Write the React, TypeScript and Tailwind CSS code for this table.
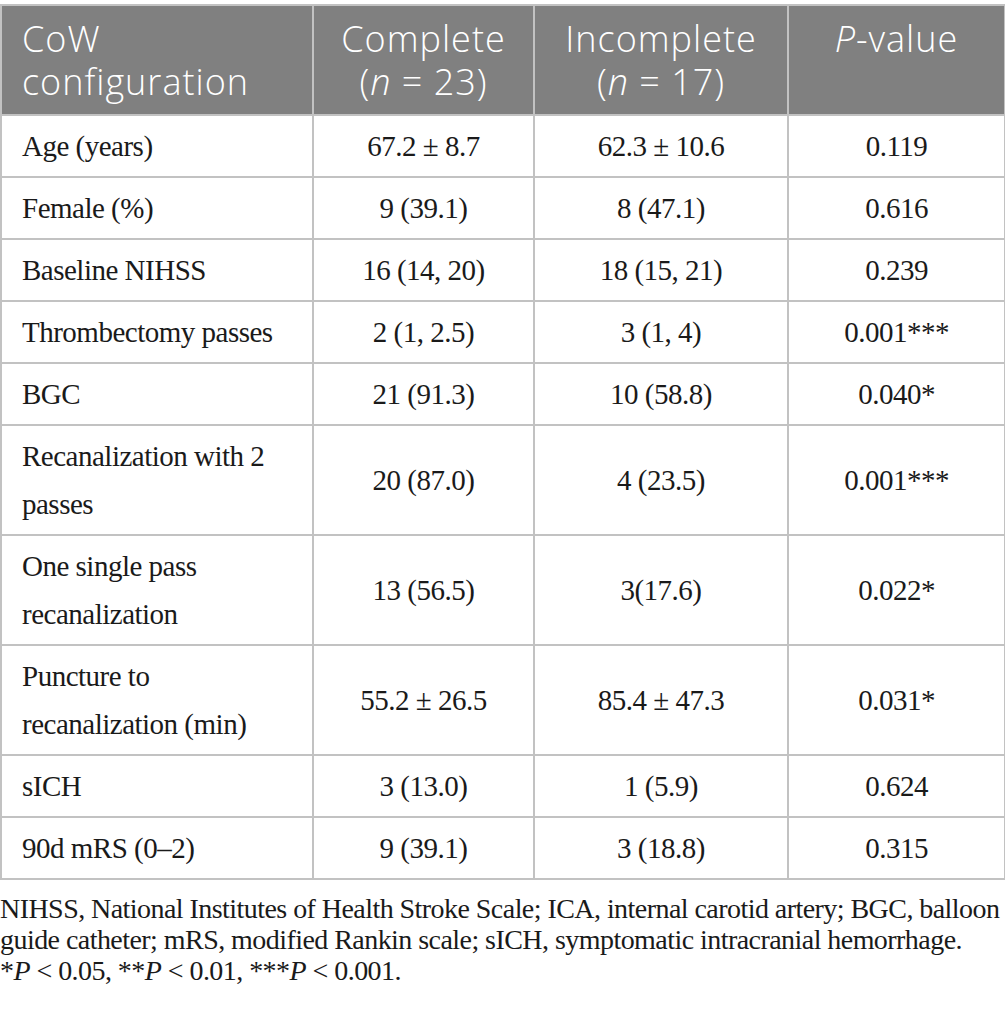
import React from 'react';

type Row = { label: string[]; a: string; b: string; p: string };

const rows: Row[] = [
  { label: ['Age (years)'], a: '67.2 ± 8.7', b: '62.3 ± 10.6', p: '0.119' },
  { label: ['Female (%)'], a: '9 (39.1)', b: '8 (47.1)', p: '0.616' },
  { label: ['Baseline NIHSS'], a: '16 (14, 20)', b: '18 (15, 21)', p: '0.239' },
  { label: ['Thrombectomy passes'], a: '2 (1, 2.5)', b: '3 (1, 4)', p: '0.001***' },
  { label: ['BGC'], a: '21 (91.3)', b: '10 (58.8)', p: '0.040*' },
  { label: ['Recanalization with 2', 'passes'], a: '20 (87.0)', b: '4 (23.5)', p: '0.001***' },
  { label: ['One single pass', 'recanalization'], a: '13 (56.5)', b: '3(17.6)', p: '0.022*' },
  { label: ['Puncture to', 'recanalization (min)'], a: '55.2 ± 26.5', b: '85.4 ± 47.3', p: '0.031*' },
  { label: ['sICH'], a: '3 (13.0)', b: '1 (5.9)', p: '0.624' },
  { label: ['90d mRS (0–2)'], a: '9 (39.1)', b: '3 (18.8)', p: '0.315' },
];

const serif = "font-['Liberation_Serif','Times_New_Roman',serif]";
const sans = "font-['Open_Sans','Noto_Sans',sans-serif]";

export default function App() {
  return (
    <div className="w-[1005px] bg-white pt-[4px] text-[#1a1a1a]">
      <table className="w-[1004px] table-fixed border-collapse">
        <colgroup>
          <col className="w-[312px]" />
          <col className="w-[221px]" />
          <col className="w-[254px]" />
          <col className="w-[217px]" />
        </colgroup>
        <thead>
          <tr className={`bg-[#808080] text-white ${sans} text-[36px] font-light leading-[43px] tracking-[1px]`}>
            <th className="border-2 border-[#c2c2c2] px-[20px] py-[11px] text-left align-top font-light">
              <div>CoW</div>
              <div>configuration</div>
            </th>
            <th className="border-2 border-[#c2c2c2] px-1 py-[11px] text-center align-top font-light">
              <div>Complete</div>
              <div>(<i>n</i> = 23)</div>
            </th>
            <th className="border-2 border-[#c2c2c2] px-1 py-[11px] text-center align-top font-light">
              <div>Incomplete</div>
              <div>(<i>n</i> = 17)</div>
            </th>
            <th className="border-2 border-[#c2c2c2] px-1 py-[11px] text-center align-top font-light">
              <div><i>P</i>-value</div>
            </th>
          </tr>
        </thead>
        <tbody className={`${serif} text-[29px] leading-[48px] tracking-[-0.5px]`}>
          {rows.map((r) => (
            <tr key={r.label.join(' ')}>
              <td className="border-2 border-[#c2c2c2] px-[20px] py-[6px] text-left align-middle">
                {r.label.map((l, i) => (
                  <div key={i}>{l}</div>
                ))}
              </td>
              <td className="border-2 border-[#c2c2c2] px-2 py-[6px] text-center align-middle">{r.a}</td>
              <td className="border-2 border-[#c2c2c2] px-2 py-[6px] text-center align-middle">{r.b}</td>
              <td className="border-2 border-[#c2c2c2] px-2 py-[6px] text-center align-middle">{r.p}</td>
            </tr>
          ))}
        </tbody>
      </table>
      <div className={`${serif} mt-[13px] text-[28px] leading-[31px] tracking-[-0.55px] whitespace-nowrap`}>
        <div>NIHSS, National Institutes of Health Stroke Scale; ICA, internal carotid artery; BGC, balloon</div>
        <div>guide catheter; mRS, modified Rankin scale; sICH, symptomatic intracranial hemorrhage.</div>
        <div>
          *<i>P</i> &lt; 0.05, **<i>P</i> &lt; 0.01, ***<i>P</i> &lt; 0.001.
        </div>
      </div>
    </div>
  );
}
